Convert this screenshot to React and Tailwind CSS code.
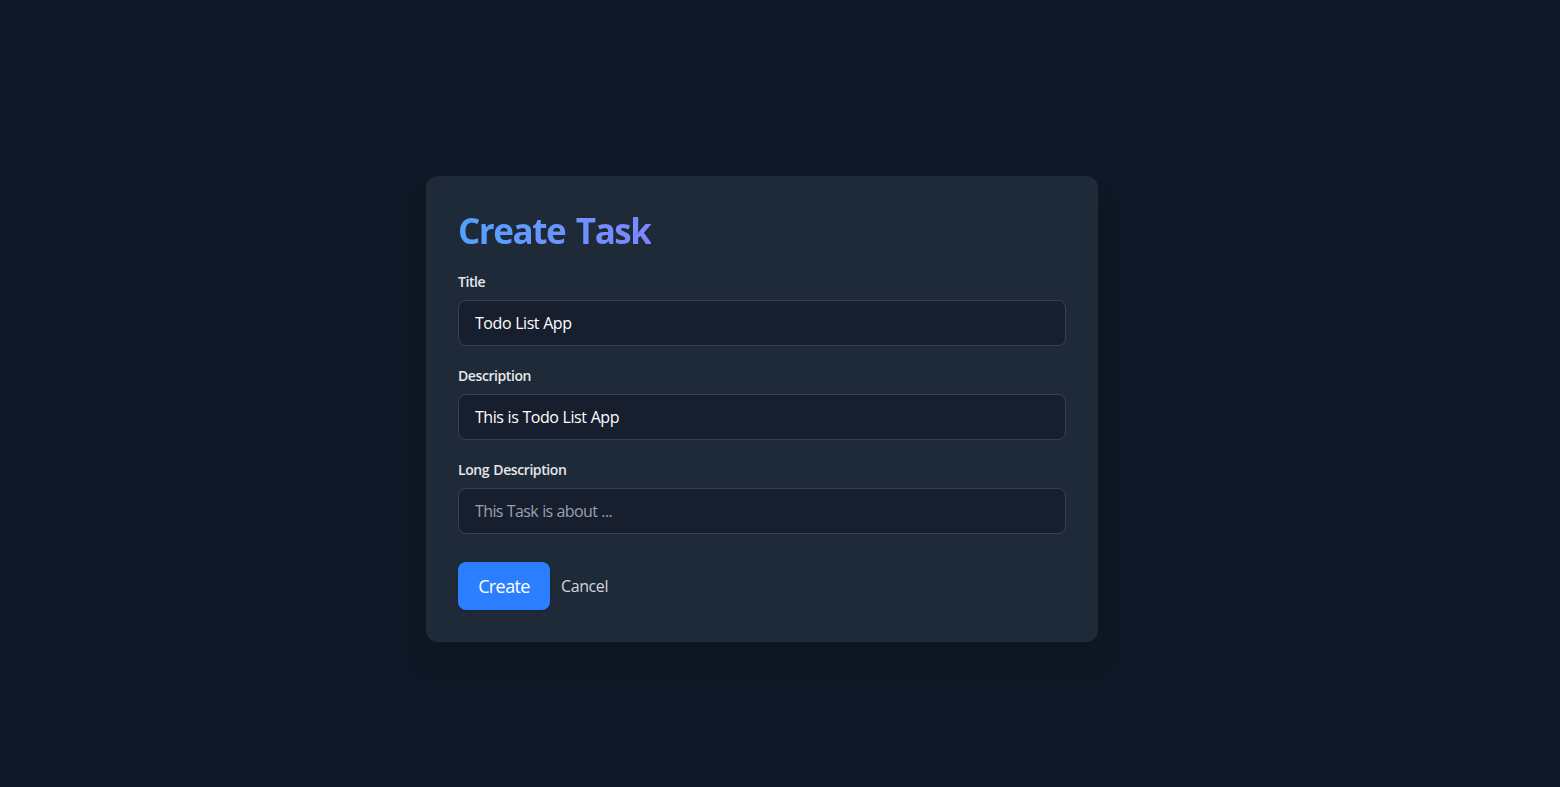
import { useState } from "react";

const initialFields = [
  {
    id: "title",
    label: "Title",
    value: "Todo List App",
    placeholder: "Task title",
  },
  {
    id: "description",
    label: "Description",
    value: "This is Todo List App",
    placeholder: "Task description",
  },
  {
    id: "longDescription",
    label: "Long Description",
    value: "",
    placeholder: "This Task is about ...",
  },
];

function Field({ field, onChange }) {
  return (
    <div>
      <label
        htmlFor={field.id}
        className="mb-2 block text-sm font-semibold tracking-[-0.42px] [word-spacing:1px] text-gray-200"
      >
        {field.label}
      </label>
      <input
        id={field.id}
        type="text"
        value={field.value}
        placeholder={field.placeholder}
        onChange={(event) => onChange(field.id, event.target.value)}
        className="block h-[46px] w-full rounded-lg border border-[#364153] bg-[#171e2e] px-4 text-base tracking-[-0.45px] [word-spacing:0.4px] text-white outline-none placeholder:tracking-[-0.6px] placeholder:text-[#99a1af] focus:border-blue-500"
      />
    </div>
  );
}

export default function App() {
  const [fields, setFields] = useState(initialFields);

  const handleChange = (id, value) =>
    setFields((current) =>
      current.map((field) => (field.id === id ? { ...field, value } : field)),
    );

  return (
    <main className="flex h-screen items-start justify-center overflow-hidden bg-[#101726] pt-44 pr-9 font-['Open_Sans','Noto_Sans',sans-serif]">
      <form
        onSubmit={(event) => event.preventDefault()}
        className="h-[466px] w-full max-w-2xl rounded-xl bg-[#1f2a39] p-8 shadow-[0_20px_25px_-5px_rgba(8,22,26,0.5)]"
      >
        <h1 className="mb-[21px] w-fit bg-linear-to-r from-blue-400 to-indigo-400 bg-clip-text pt-[3px] text-[35px] leading-[40px] font-bold tracking-[-1.45px] text-transparent [word-spacing:3px]">
          Create Task
        </h1>
        <div className="flex flex-col gap-5">
          {fields.map((field) => (
            <Field key={field.id} field={field} onChange={handleChange} />
          ))}
        </div>
        <div className="mt-7 flex items-center gap-[11px]">
          <button
            type="submit"
            className="h-12 w-[92px] rounded-lg bg-[#2b7fff] text-lg tracking-[-0.6px] text-white shadow-sm"
          >
            Create
          </button>
          <button type="button" className="text-base tracking-[-0.4px] text-gray-300">
            Cancel
          </button>
        </div>
      </form>
    </main>
  );
}
